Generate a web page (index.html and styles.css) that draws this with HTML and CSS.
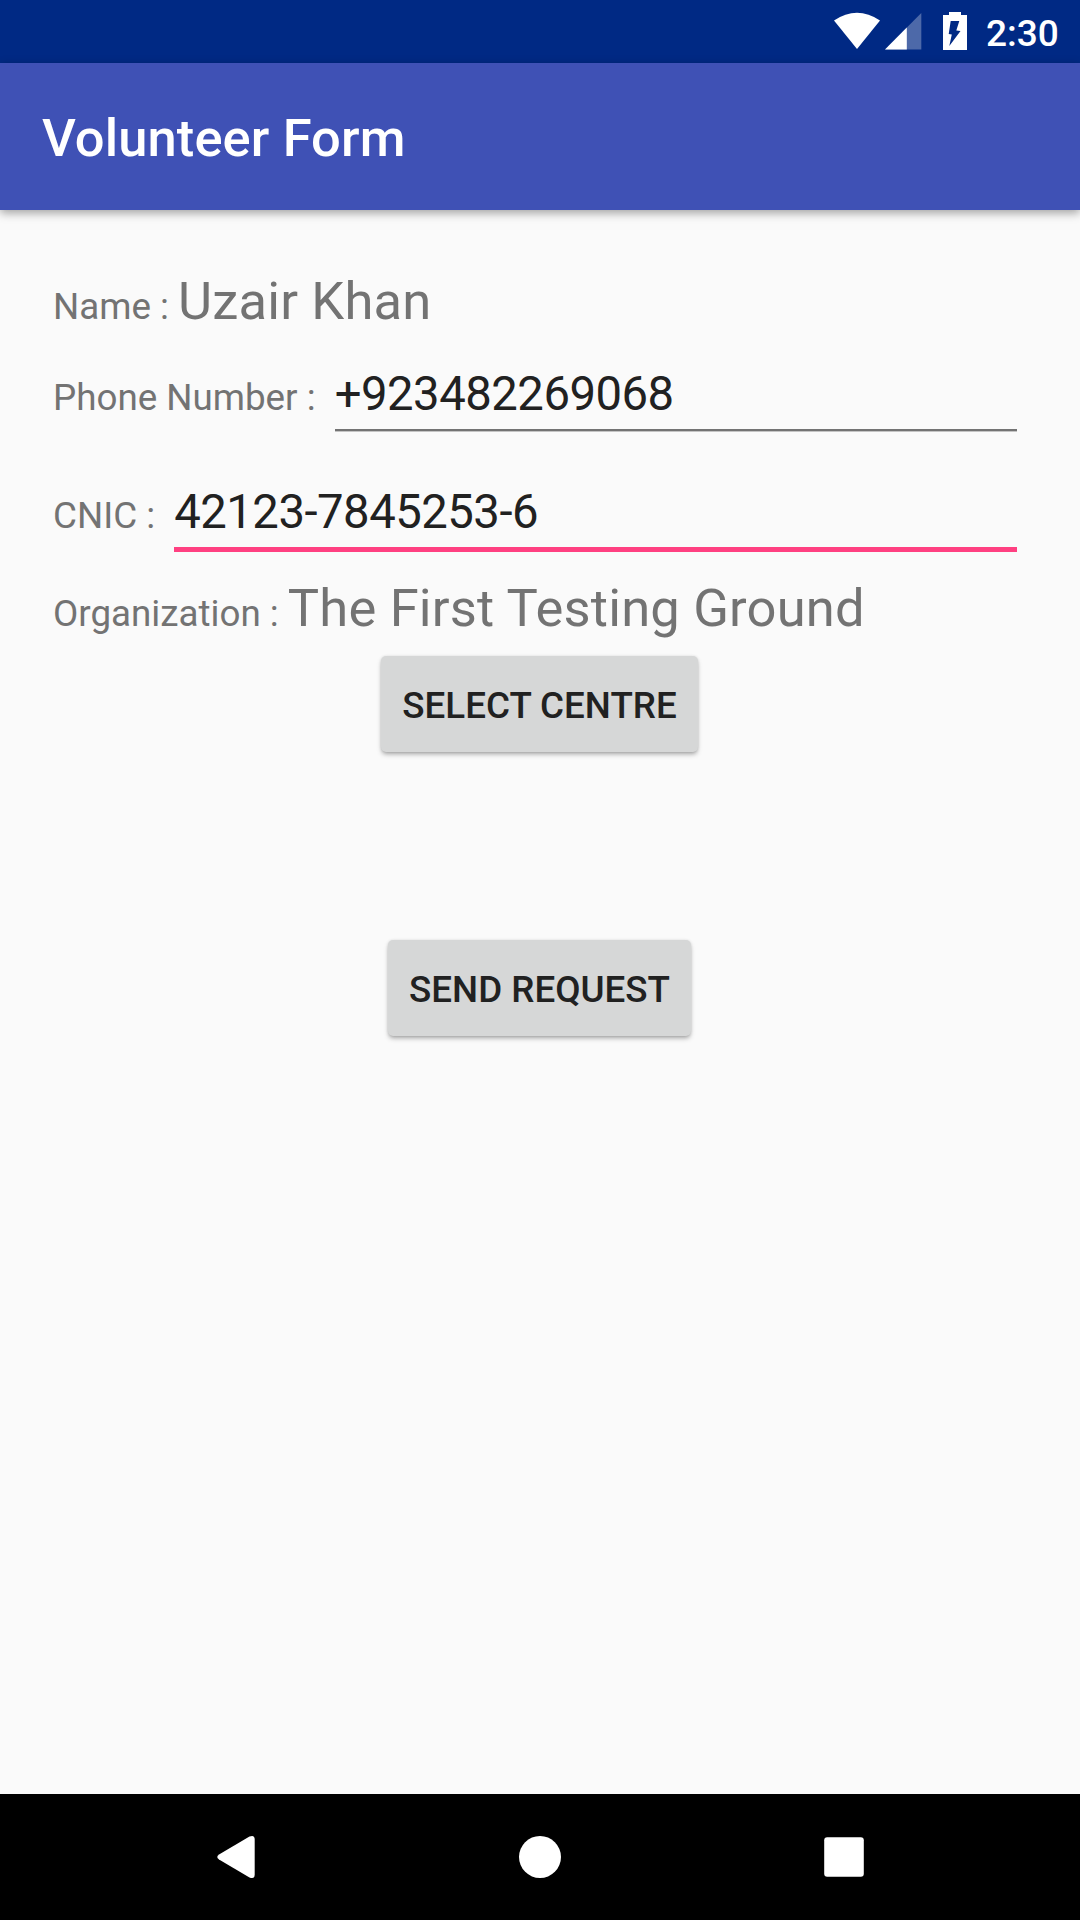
FILE: index.html
```html
<!DOCTYPE html>
<html lang="en">
<head>
<meta charset="utf-8">
<title>Volunteer Form</title>
<link rel="stylesheet" href="styles.css">
</head>
<body>
<div class="status">
  <svg class="status-icons" width="140" height="63" viewBox="0 0 140 63" fill="#fff">
    <path d="M0 20.5Q23 5 46 20.5L23 49Z"/>
    <path d="M87.3 13V49.5H51Z" opacity=".3"/>
    <path d="M72.8 27.5V49.5H51Z"/>
    <path fill-rule="evenodd" d="M115 12H127V15H133V50H109V15H115ZM116.7 21H125.3L122.3 30.5L126.5 31L115.3 46L117.8 34.5L114.7 34Z"/>
  </svg>
  <span class="time">2:30</span>
</div>
<header class="appbar"><h1 class="title">Volunteer Form</h1></header>
<main class="form">
  <div class="row name"><span class="label">Name : </span><span class="value">Uzair Khan</span></div>
  <div class="row phone"><span class="label">Phone Number : </span><span class="field">+923482269068</span></div>
  <div class="row cnic"><span class="label">CNIC : </span><span class="field focused">42123-7845253-6</span></div>
  <div class="row org"><span class="label">Organization : </span><span class="value">The First Testing Ground</span></div>
  <button class="btn select">SELECT CENTRE</button>
  <button class="btn send">SEND REQUEST</button>
</main>
<nav class="navbar">
  <svg width="1080" height="126" viewBox="0 0 1080 126" fill="#fff">
    <path d="M249.5 42.5Q254.7 40.5 254.7 45.5V80.5Q254.7 85.5 249.5 83.5L219 65.5Q215.5 63 219 60.5Z"/>
    <circle cx="540" cy="63" r="21"/>
    <rect x="824.2" y="43.2" width="39.6" height="39.6" rx="3"/>
  </svg>
</nav>
</body>
</html>
```
FILE: styles.css
```css
* { box-sizing: border-box; }
body { margin: 0; width: 1080px; height: 1920px; display: flex; flex-direction: column; background: #fafafa; font-family: Roboto, sans-serif; overflow: hidden; }
.status { height: 63px; flex: none; background: #002984; display: flex; justify-content: flex-end; color: #fff; }
.status-icons { margin-right: 12px; }
.time { width: 94px; font-size: 37px; font-weight: 500; line-height: 67px; white-space: nowrap; }
.appbar { height: 147px; flex: none; background: #3f51b5; padding-left: 42px; box-shadow: 0 3px 9px rgba(0,0,0,.36); }
.title { margin: 0; color: #fff; font-size: 52.5px; letter-spacing: .1px; font-weight: 500; line-height: 151px; white-space: nowrap; }
.form { flex: 1; padding: 52px 53px 0; display: flex; flex-direction: column; align-items: center; color: #737373; }
.row { width: 100%; display: flex; align-items: baseline; white-space: pre; }
.label { font-size: 36.75px; line-height: 43px; }
.value { font-size: 52.5px; letter-spacing: .18px; line-height: 70px; }
.name { height: 88px; padding-top: 4px; }
.phone { height: 118px; }
.cnic { height: 105px; }
.org { height: 83px; }
.field { flex: 1; margin-left: 10px; margin-right: 10px; height: 81px; padding-top: 13px; font-size: 47.25px; letter-spacing: -.5px; line-height: 62px; color: #212121; border-bottom: 2px solid #737373; box-shadow: 0 1px #c4c4c4; }
.focused { height: 84px; border-bottom: 5px solid #ff4081; box-shadow: none; }
.btn { flex: none; height: 96px; margin-right: 1px; padding: 3px 0 0; border: 0; border-radius: 5px; background: #d6d7d7; color: #212121; font: 500 36.75px Roboto, sans-serif; box-shadow: 0 3px 5px -1px rgba(0,0,0,.35), 0 0 3px rgba(0,0,0,.1); white-space: nowrap; }
.select { width: 317px; }
.send { width: 303px; margin-top: 188px; }
.navbar { height: 126px; flex: none; background: #000; }
.navbar svg { display: block; }
```
